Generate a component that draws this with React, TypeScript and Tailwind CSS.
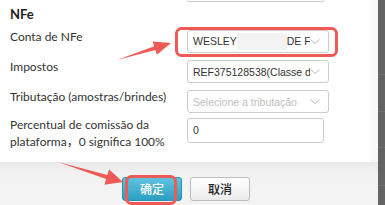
import React from 'react';

const labelFont = { fontFamily: 'Lato, "Noto Sans CJK SC", sans-serif' };
const cnFont = { fontFamily: '"Noto Sans CJK SC", sans-serif' };
const fieldFont = { fontFamily: '"Liberation Sans", Arial, sans-serif' };

const Chevron = () => (
    <svg width="10" height="5" viewBox="0 0 10 5" className="shrink-0">
        <path d="M0.5 0.5 L5 4.5 L9.5 0.5" fill="none" stroke="#b8b8b8" strokeWidth="1" />
    </svg>
);

const SelectBox = ({ children, placeholder }: { children: React.ReactNode; placeholder?: boolean }) => (
    <div className="w-[142px] h-[23px] border border-[#cccccc] rounded-[3px] bg-white flex items-center pl-[5px] pr-[8px]">
        <div
            className={`flex-1 overflow-hidden whitespace-nowrap text-[10.5px] leading-4 ${placeholder ? 'text-[#c0c0c0]' : 'text-[#333]'}`}
            style={fieldFont}
        >
            {children}
        </div>
        <Chevron />
    </div>
);

const Row = ({ label, children }: { label: React.ReactNode; children: React.ReactNode }) => (
    <div className="flex items-start">
        <div className="w-[187px] shrink-0 -mt-[2px] pl-[10px] whitespace-nowrap text-[12px] leading-[17px] text-[#333]" style={labelFont}>
            {label}
        </div>
        {children}
    </div>
);

export default function App() {
    return (
        <div className="relative w-[385px] h-[205px] overflow-hidden flex bg-white">
            <div className="w-[378px] flex flex-col bg-[#f8f8f8]">
                {/* form card */}
                <div className="w-[370px] bg-white pb-[12px]">
                    <div className="ml-[187px] w-[137px] h-[2px] border-x border-b border-[#cccccc] rounded-b-[3px]" />
                    <div className="mt-[4px] pl-[10px] h-[16px] text-[13px] leading-4 font-bold text-[#222]" style={labelFont}>
                        NFe
                    </div>
                    <div className="mt-[8px] flex flex-col gap-[7px]">
                        <Row label="Conta de NFe">
                            <SelectBox>
                                WESLEY
                                <span className="inline-block align-middle w-[50px] h-[17px] bg-[#f3f3f3] rounded-[2px]" />
                                DE FERREIRA
                            </SelectBox>
                        </Row>
                        <Row label="Impostos">
                            <SelectBox>REF375128538(Classe de imposto)</SelectBox>
                        </Row>
                        <Row label="Tributação (amostras/brindes)">
                            <SelectBox placeholder>Selecione a tributação</SelectBox>
                        </Row>
                        <div className="-mt-[2px]">
                            <Row
                                label={
                                    <>
                                        Percentual de comissão da
                                        <br />
                                        plataforma，0 significa 100%
                                    </>
                                }
                            >
                                <div
                                    className="w-[137px] h-[25px] border border-[#cccccc] rounded-[3px] flex items-center pl-[5px] text-[10.5px] text-[#333]"
                                    style={fieldFont}
                                >
                                    0
                                </div>
                            </Row>
                        </div>
                    </div>
                </div>
                {/* footer */}
                <div className="flex-1 bg-gradient-to-b from-[#e9e9e9] via-[#f2f2f2] via-30% to-[#f3f3f3] flex justify-center items-start pt-[15px] pr-[6px] gap-[8px]">
                    <button
                        className="w-[60px] h-[24px] flex items-center justify-center rounded-[3px] border border-[#2b93b5] bg-gradient-to-b from-[#5ec3df] to-[#2c9ec2] text-white text-[12px] font-medium leading-none"
                        style={cnFont}
                    >
                        确定
                    </button>
                    <button
                        className="w-[60px] h-[24px] flex items-center justify-center rounded-[3px] border border-[#bdbdbd] bg-gradient-to-b from-white to-[#ebebeb] text-[#222] text-[12px] font-medium leading-none"
                        style={cnFont}
                    >
                        取消
                    </button>
                </div>
            </div>
            <div className="w-[7px] bg-[#636363] flex flex-col">
                <div className="h-[75px] border-b border-[#707070]" />
                <div className="h-[37px] border-b border-[#707070]" />
                <div className="h-[36px] border-b border-[#707070]" />
                <div className="h-[38px] border-b border-[#707070]" />
            </div>

            {/* annotations */}
            <svg className="absolute inset-0 pointer-events-none" width="385" height="205" viewBox="0 0 385 205">
                <rect x="176.5" y="28.5" width="160" height="27" rx="5" fill="none" stroke="#ee5a55" strokeWidth="3" />
                <rect x="126.5" y="176.5" width="49" height="27" rx="5" fill="none" stroke="#ee5a55" strokeWidth="3" />
                <polygon points="117,60 154.2,46.2 152.7,41.4 171,43 156.9,54.8 155.4,50" fill="#ee5a55" />
                <polygon points="58,162 107.3,174.9 109.1,169.4 123,182 104.4,184.7 106.1,179.1" fill="#ee5a55" />
            </svg>
        </div>
    );
}
